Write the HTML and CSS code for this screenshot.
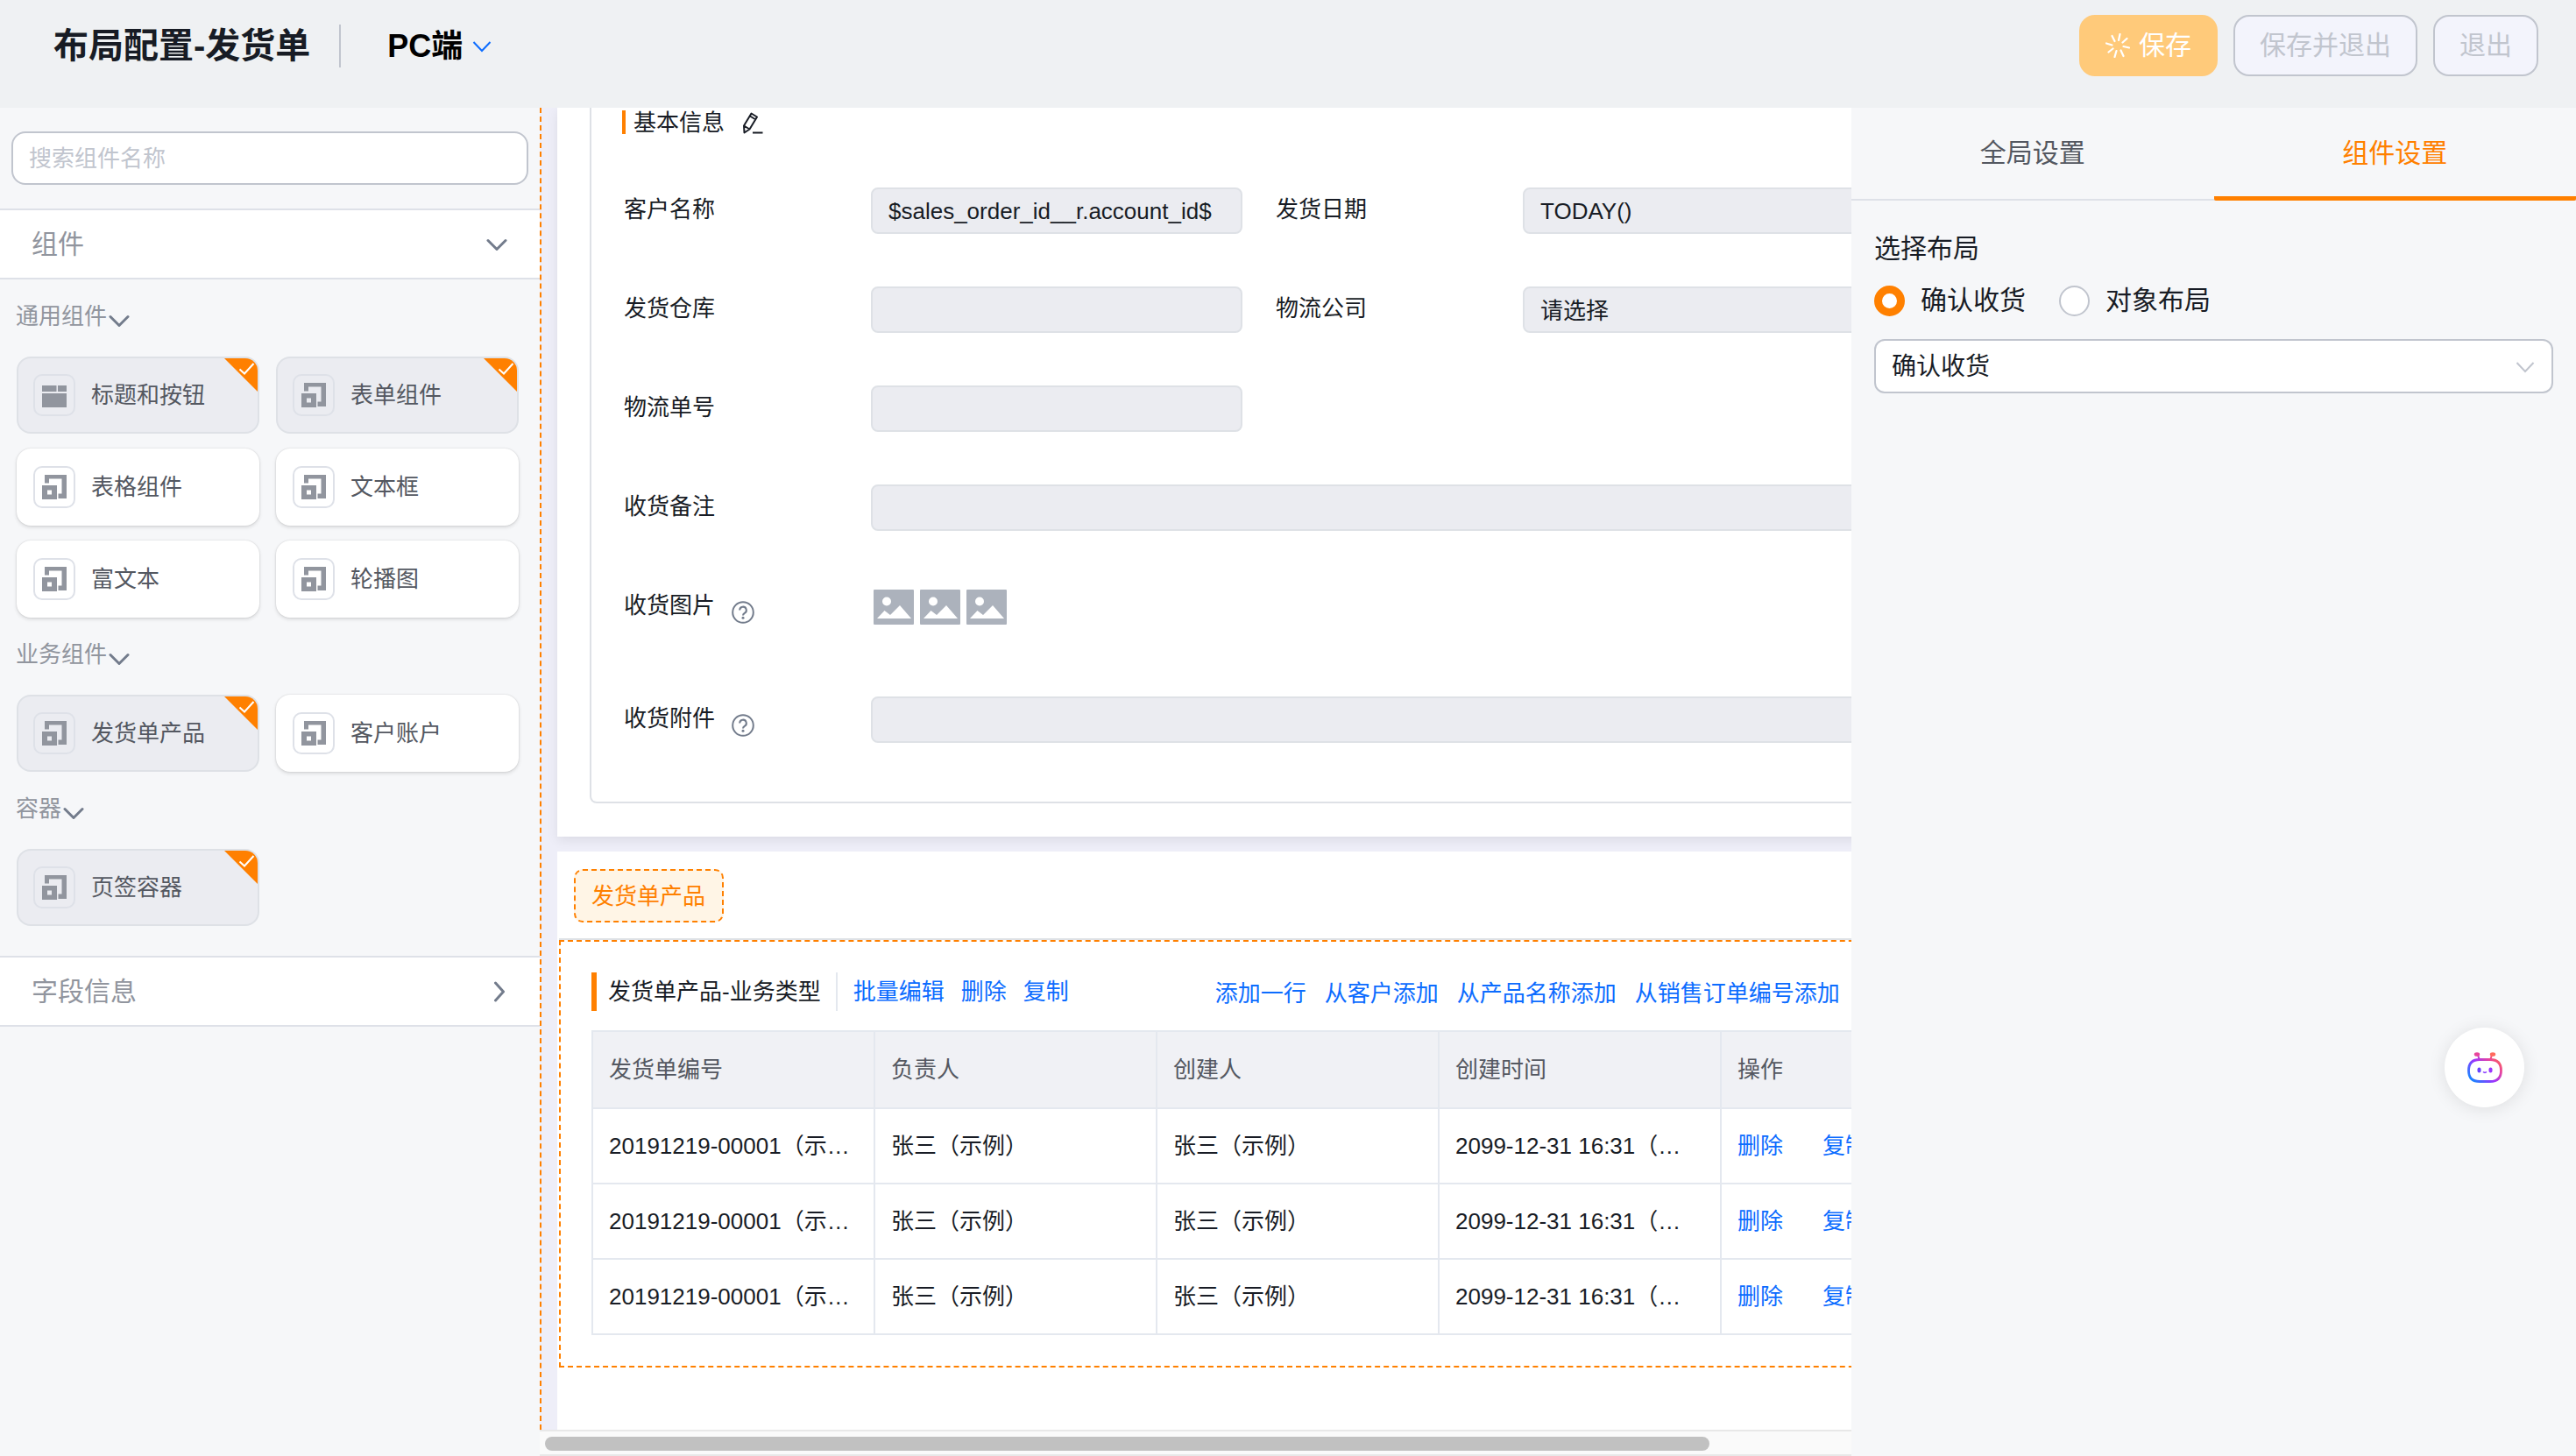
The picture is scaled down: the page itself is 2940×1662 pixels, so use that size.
FILE: index.html
```html
<!DOCTYPE html>
<html lang="zh-CN">
<head>
    <meta charset="UTF-8">
    <meta name="viewport" content="width=device-width, initial-scale=1.0">
    <title>布局配置-发货单</title>
    <link rel="stylesheet" href="styles.css">
</head>
<body>

    <!-- Shared icons -->
    <svg class="sprite" aria-hidden="true">
        <symbol id="i-down" viewBox="0 0 24 24"><path d="M2 7.500l10 10 10-10" fill="none" stroke="currentColor" stroke-width="3" stroke-linecap="round" stroke-linejoin="round"/></symbol>
        <symbol id="i-right" viewBox="0 0 24 24"><path d="M10.500 2l9 10-9 10" fill="none" stroke="currentColor" stroke-width="3" stroke-linecap="round" stroke-linejoin="round"/></symbol>
        <symbol id="i-thin-down" viewBox="0 0 24 24"><path d="M2.500 7l9.500 10 9.500-10" fill="none" stroke="currentColor" stroke-width="2"/></symbol>
        <symbol id="i-comp" viewBox="0 0 28 28"><path fill="currentColor" d="M3 0h25v27h-9.500v-5.500h4V4.500H8v5H3zM0 12h17v16H0zM6 17.500v5h5v-5z" fill-rule="evenodd"/></symbol>
        <symbol id="i-head" viewBox="0 0 28 28"><path fill="currentColor" d="M0 3h16.500v7H0zM18 3h10v7H18zM0 12h28v16H0z"/></symbol>
        <symbol id="i-picked" viewBox="0 0 38 38"><path fill="#ff8000" d="M0 0h38v38z"/><path d="M17.500 12.500l5.500 5 10.500-11.500" fill="none" stroke="#fff" stroke-width="2"/></symbol>
        <symbol id="i-help" viewBox="0 0 26 26"><circle cx="13" cy="13" r="11.800" fill="none" stroke="currentColor" stroke-width="2"/><path d="M9.200 10.500a3.800 3.800 0 1 1 5.600 3.300c-1.300.8-1.800 1.300-1.800 2.800" fill="none" stroke="currentColor" stroke-width="2"/><circle cx="13" cy="19.300" r="1.500" fill="currentColor"/></symbol>
        <symbol id="i-image" viewBox="0 0 46 40"><rect width="46" height="40" rx="1" fill="#acb2bc"/><circle cx="15" cy="13.500" r="5" fill="#fff"/><path d="M4 33l8.500-9 6.500 5 11-11 13 15z" fill="#fff"/></symbol>
    </svg>

    <header class="topbar">
        <h1 class="topbar-title">布局配置-发货单</h1>
        <button class="platform">PC端<svg class="icon"><use href="#i-thin-down"/></svg></button>
        <div class="topbar-actions">
            <button class="btn btn-primary">
                <svg class="spinner" viewBox="0 0 28 28"><path d="M15 8l1.500-7M19.500 10.500l5-4.500M20.500 15l6.500 1.500M17.500 19.500l3 6.500M12.500 20l-2 7M8.500 17.500l-5 4M7.500 13.500L1 11.500M10.500 9L7.500 3" fill="none" stroke="currentColor" stroke-width="2.200" stroke-linecap="round"/></svg>保存
            </button>
            <button class="btn">保存并退出</button>
            <button class="btn">退出</button>
        </div>
    </header>

    <div class="workspace">

        <!-- Component library -->
        <aside class="library">
            <div class="search"><input type="text" placeholder="搜索组件名称" aria-label="搜索组件名称"></div>

            <button class="fold">组件<svg class="icon"><use href="#i-down"/></svg></button>
            <div class="fold-body">
                <button class="group-name">通用组件<svg class="icon"><use href="#i-down"/></svg></button>
                <div class="cards">
                    <button class="card picked"><span class="card-icon"><svg><use href="#i-head"/></svg></span>标题和按钮<svg class="corner"><use href="#i-picked"/></svg></button>
                    <button class="card picked"><span class="card-icon"><svg><use href="#i-comp"/></svg></span>表单组件<svg class="corner"><use href="#i-picked"/></svg></button>
                    <button class="card"><span class="card-icon"><svg><use href="#i-comp"/></svg></span>表格组件</button>
                    <button class="card"><span class="card-icon"><svg><use href="#i-comp"/></svg></span>文本框</button>
                    <button class="card"><span class="card-icon"><svg><use href="#i-comp"/></svg></span>富文本</button>
                    <button class="card"><span class="card-icon"><svg><use href="#i-comp"/></svg></span>轮播图</button>
                </div>
                <button class="group-name">业务组件<svg class="icon"><use href="#i-down"/></svg></button>
                <div class="cards">
                    <button class="card picked"><span class="card-icon"><svg><use href="#i-comp"/></svg></span>发货单产品<svg class="corner"><use href="#i-picked"/></svg></button>
                    <button class="card"><span class="card-icon"><svg><use href="#i-comp"/></svg></span>客户账户</button>
                </div>
                <button class="group-name">容器<svg class="icon"><use href="#i-down"/></svg></button>
                <div class="cards">
                    <button class="card picked"><span class="card-icon"><svg><use href="#i-comp"/></svg></span>页签容器<svg class="corner"><use href="#i-picked"/></svg></button>
                </div>
            </div>
            <button class="fold">字段信息<svg class="icon"><use href="#i-right"/></svg></button>
        </aside>

        <!-- Layout canvas -->
        <main class="stage">
            <div class="canvas">
                <section class="panel form-panel">
                    <div class="form-box">
                        <h2 class="form-title">基本信息
                            <svg class="pencil" viewBox="0 0 24 26"><path d="M2 16.500L10.500 2.500l6.500 4L8.500 20.500l-6 4zM2 16.500l6.500 4M9 5.500l6.500 4M12 24.500h11.500" fill="none" stroke="currentColor" stroke-width="2" stroke-linejoin="round"/></svg>
                        </h2>
                        <div class="fields">
                            <div class="field"><label for="account">客户名称</label><input id="account" type="text" value="$sales_order_id__r.account_id$" readonly></div>
                            <div class="field"><label for="date">发货日期</label><input id="date" type="text" value="TODAY()" readonly></div>
                            <div class="field"><label for="store">发货仓库</label><input id="store" type="text" readonly></div>
                            <div class="field"><label for="express">物流公司</label><select id="express"><option>请选择</option></select></div>
                            <div class="field wide half"><label for="expressNo">物流单号</label><input id="expressNo" type="text" readonly></div>
                            <div class="field wide"><label for="remark">收货备注</label><input id="remark" type="text" readonly></div>
                            <div class="field wide pictures">
                                <span class="label">收货图片<svg class="help"><use href="#i-help"/></svg></span>
                                <div class="thumbs">
                                    <svg><use href="#i-image"/></svg>
                                    <svg><use href="#i-image"/></svg>
                                    <svg><use href="#i-image"/></svg>
                                </div>
                            </div>
                            <div class="field wide"><label for="attach">收货附件<svg class="help"><use href="#i-help"/></svg></label><input id="attach" type="text" readonly></div>
                        </div>
                    </div>
                </section>

                <section class="panel tab-panel">
                    <div class="tab-bar"><button class="tab-chip">发货单产品</button></div>
                    <div class="selected">
                        <div class="toolbar">
                            <h2 class="toolbar-title">发货单产品-业务类型</h2>
                            <div class="links batch"><a href="#">批量编辑</a><a href="#">删除</a><a href="#">复制</a></div>
                            <div class="links adders"><a href="#">添加一行</a><a href="#">从客户添加</a><a href="#">从产品名称添加</a><a href="#">从销售订单编号添加</a></div>
                        </div>
                        <table class="grid">
                            <thead>
                                <tr><th>发货单编号</th><th>负责人</th><th>创建人</th><th>创建时间</th><th>操作</th></tr>
                            </thead>
                            <tbody>
                                <tr><td>20191219-00001（示例）</td><td>张三（示例）</td><td>张三（示例）</td><td>2099-12-31 16:31（示例）</td><td><a href="#">删除</a><a href="#">复制</a></td></tr>
                                <tr><td>20191219-00001（示例）</td><td>张三（示例）</td><td>张三（示例）</td><td>2099-12-31 16:31（示例）</td><td><a href="#">删除</a><a href="#">复制</a></td></tr>
                                <tr><td>20191219-00001（示例）</td><td>张三（示例）</td><td>张三（示例）</td><td>2099-12-31 16:31（示例）</td><td><a href="#">删除</a><a href="#">复制</a></td></tr>
                            </tbody>
                        </table>
                    </div>
                </section>
            </div>
            <div class="scrollbar"><div class="thumb"></div></div>
        </main>

        <!-- Settings -->
        <aside class="settings">
            <nav class="tabs">
                <button class="tab">全局设置</button>
                <button class="tab active">组件设置</button>
            </nav>
            <div class="settings-body">
                <div class="settings-name">选择布局</div>
                <div class="radios">
                    <label><input type="radio" name="layout" checked>确认收货</label>
                    <label><input type="radio" name="layout">对象布局</label>
                </div>
                <div class="select-box">
                    <select aria-label="选择布局"><option>确认收货</option></select>
                    <svg class="icon"><use href="#i-thin-down"/></svg>
                </div>
            </div>
        </aside>
    </div>

    <!-- Floating assistant -->
    <button class="assistant" aria-label="助手">
        <svg viewBox="0 0 42 38">
            <defs>
                <linearGradient id="bot" x1="4" y1="34" x2="36" y2="4" gradientUnits="userSpaceOnUse">
                    <stop offset="0" stop-color="#0a8cff"/>
                    <stop offset=".45" stop-color="#9a35ff"/>
                    <stop offset=".75" stop-color="#e8459c"/>
                    <stop offset="1" stop-color="#ff6a4d"/>
                </linearGradient>
            </defs>
            <path d="M15 9.500h12c8 0 12.500 3.500 12.500 12.500S35 34.500 27 34.500H15C7 34.500 2.500 31 2.500 22S7 9.500 15 9.500z" fill="none" stroke="url(#bot)" stroke-width="2.800"/>
            <path d="M14.500 9l-1.500-5M27.500 9L29 4" stroke="url(#bot)" stroke-width="2"/>
            <ellipse cx="12" cy="3.500" rx="3.200" ry="2.300" fill="#e8459c"/>
            <ellipse cx="30" cy="3.500" rx="3.200" ry="2.300" fill="#ff6a5d"/>
            <rect x="12.500" y="18.500" width="4" height="6" rx="2" fill="#6a45ff"/>
            <rect x="25.500" y="18.500" width="4" height="6" rx="2" fill="#9a35ff"/>
            <path d="M19 23.500q2 1.800 4 0" fill="none" stroke="#8a3cff" stroke-width="1.500"/>
        </svg>
    </button>

</body>
</html>
```

FILE: styles.css
```css
* {
    box-sizing: border-box;
}
body {
    margin: 0;
    height: 100vh;
    display: flex;
    flex-direction: column;
    overflow: hidden;
    font-family: "Liberation Sans", "Noto Sans CJK SC", sans-serif;
    font-size: 26px;
    line-height: 40px;
    color: #181c25;
    background: #eff1f3;
}
button, input, select {
    font: inherit;
    color: inherit;
    margin: 0;
    padding: 0;
    border: 0;
    background: none;
    appearance: none;
}
button {
    cursor: pointer;
}
h1, h2 {
    margin: 0;
    font-weight: normal;
}
a {
    color: #0c6cff;
    text-decoration: none;
}
.sprite {
    display: none;
}
.icon {
    width: 24px;
    height: 24px;
    flex: none;
    color: #737c8c;
}

/* Top bar */
.topbar {
    height: 123px;
    flex: none;
    display: flex;
    align-items: flex-start;
    padding: 17px 43px 0 61px;
}
.topbar-title {
    margin-top: 11px;
    padding-right: 33px;
    border-right: 2px solid #c1c5ce;
    font-size: 40px;
    line-height: 49px;
    font-weight: bold;
}
.platform {
    display: flex;
    align-items: center;
    gap: 10px;
    margin: 11px 0 0 53px;
    font-size: 36px;
    line-height: 49px;
    font-weight: bold;
    color: #000;
}
.platform .icon {
    color: #0c6cff;
}
.topbar-actions {
    display: flex;
    gap: 18px;
    margin-left: auto;
}
.btn {
    display: flex;
    align-items: center;
    height: 70px;
    padding: 0 28px;
    border: 2px solid #c1c5ce;
    border-radius: 18px;
    background: #f3f4fc;
    color: #c1c5ce;
    font-size: 30px;
}
.btn-primary {
    border-color: #ffca7a;
    background: #ffca7a;
    color: #fff;
}
.spinner {
    width: 28px;
    height: 28px;
    margin-right: 10px;
}

.workspace {
    flex: 1;
    min-height: 0;
    display: flex;
}

/* Component library */
.library {
    width: 616px;
    flex: none;
    background: #f6f7f9;
}
.search {
    padding: 27px 13px;
}
.search input {
    display: block;
    width: 100%;
    height: 61px;
    padding: 2px 18px 0;
    border: 2px solid #c1c5ce;
    border-radius: 16px;
    background: #fff;
}
.search input::placeholder {
    color: #c1c5ce;
    opacity: 1;
}
.fold {
    display: flex;
    align-items: center;
    justify-content: space-between;
    width: 100%;
    height: 81px;
    padding: 0 37px 0 36px;
    border: solid #dee1e8;
    border-width: 2px 0;
    background: #fff;
    font-size: 30px;
    color: #91959e;
}
.fold-body {
    padding: 0 24px 34px 19px;
}
.group-name {
    display: flex;
    align-items: center;
    height: 84px;
    margin: 0 0 4px -1px;
    color: #91959e;
}
.group-name .icon {
    margin: 9px 0 0 2px;
}
.cards {
    display: grid;
    grid-template-columns: 1fr 1fr;
    gap: 17px 19px;
}
.card {
    position: relative;
    display: flex;
    align-items: center;
    height: 88px;
    padding: 0 19px;
    border-radius: 16px;
    background: #fff;
    box-shadow: 0 0 2px rgba(0, 0, 0, 0.15), 0 2px 4px rgba(0, 0, 0, 0.12);
    color: #545861;
    overflow: hidden;
}
.card.picked {
    padding: 0 17px;
    border: 2px solid #dee1e6;
    background: #ebecf1;
    box-shadow: none;
}
.card-icon {
    display: flex;
    width: 48px;
    height: 48px;
    margin-right: 18px;
    padding: 8px;
    border: 2px solid #dee1e8;
    border-radius: 10px;
    color: #91959e;
}
.card-icon svg {
    width: 28px;
    height: 28px;
}
.corner {
    position: absolute;
    top: 0;
    right: 0;
    width: 38px;
    height: 38px;
}

/* Canvas */
.stage {
    flex: 1;
    min-width: 0;
    display: flex;
    flex-direction: column;
}
.canvas {
    flex: 1;
    min-height: 0;
    display: flex;
    flex-direction: column;
    padding-left: 18px;
    border-left: 2px dashed #ff8000;
    background: #eeeef8;
    overflow: hidden;
}
.panel {
    width: 1640px;
    flex: none;
    background: #fff;
}
.form-panel {
    padding: 0 38px 38px 37px;
    margin-bottom: 17px;
    box-shadow: 0 4px 12px rgba(0, 0, 0, 0.08);
}
.form-box {
    padding: 3px 37px 68px 35px;
    border: solid #dee1e6;
    border-width: 0 2px 2px;
    border-radius: 0 0 8px 8px;
}
.form-title {
    display: flex;
    align-items: center;
    gap: 20px;
    height: 27px;
    padding-left: 9px;
    border-left: 4px solid #ff8000;
    font-size: 26px;
    line-height: 26px;
}
.pencil {
    width: 24px;
    height: 26px;
}
.fields {
    display: grid;
    grid-template-columns: 706px 706px;
    gap: 61px 38px;
    margin: 61px 0 0 2px;
}
.field {
    display: grid;
    grid-template-columns: 282px 1fr;
    align-items: start;
}
.field.wide {
    grid-column: span 2;
}
.field.half {
    grid-template-columns: 282px 424px;
}
.field label,
.field .label {
    display: flex;
    align-items: center;
    line-height: 50px;
}
.field input,
.field select {
    width: 100%;
    height: 53px;
    margin-bottom: -1px;
    padding: 2px 18px 0;
    border: 2px solid #dee1e6;
    border-radius: 8px;
    background: #ebecf1;
}
.help {
    width: 26px;
    height: 26px;
    margin: 16px 0 0 19px;
    color: #737c8c;
}
.pictures {
    height: 68px;
}
.thumbs {
    display: flex;
    gap: 7px;
    padding: 7px 3px;
}
.thumbs svg {
    width: 46px;
    height: 40px;
}

/* Product tab */
.tab-panel {
    flex: 1 0 auto;
    padding-left: 2px;
}
.tab-bar {
    padding: 20px 17px 18px;
    border-bottom: 2px solid #dee1e6;
}
.tab-chip {
    display: block;
    height: 61px;
    padding: 0 19px 0 18px;
    border: 2px dashed #ff8000;
    border-radius: 10px;
    background: #fff5e6;
    color: #ff8000;
}
.selected {
    padding: 35px;
    border: 2px dashed #ff8000;
}
.toolbar {
    display: flex;
    align-items: center;
    height: 44px;
    margin-bottom: 22px;
}
.toolbar-title {
    padding: 0 17px 0 13px;
    border-left: 6px solid #ff8000;
    border-right: 2px solid #e4e8ef;
    font-size: 26px;
    line-height: 44px;
}
.links {
    display: flex;
    gap: 19px;
    padding-left: 18px;
}
.adders {
    gap: 21px;
    margin-left: 149px;
    padding-top: 4px;
}
.grid {
    width: 1550px;
    table-layout: fixed;
    border-collapse: collapse;
}
.grid th,
.grid td {
    width: 322px;
    height: 86px;
    padding: 0 20px 0 18px;
    border: 2px solid #e4e8ef;
    text-align: left;
    white-space: nowrap;
    overflow: hidden;
    text-overflow: ellipsis;
}
.grid th:last-child,
.grid td:last-child {
    width: auto;
}
.grid th {
    height: 88px;
    background: #f0f1f5;
    color: #545861;
    font-weight: normal;
}
.grid a {
    margin-right: 45px;
}
.scrollbar {
    height: 30px;
    flex: none;
    padding: 6px;
    border: solid #e8e8e8;
    border-width: 2px 0;
    background: #fafafa;
}
.thumb {
    width: 89.5%;
    height: 16px;
    border-radius: 8px;
    background: #c1c1c1;
}

/* Settings */
.settings {
    width: 827px;
    flex: none;
    background: #f6f7f9;
}
.tabs {
    display: flex;
    height: 106px;
    border-bottom: 2px solid #dee1e8;
}
.tab {
    flex: 1;
    height: 106px;
    padding-top: 3px;
    border-bottom: 5px solid transparent;
    font-size: 30px;
    color: #545861;
}
.tab.active {
    border-color: #ff8000;
    border-radius: 2px;
    color: #ff8000;
}
.settings-body {
    padding: 35px 26px;
    font-size: 30px;
}
.radios {
    display: flex;
    gap: 38px;
    margin: 19px 0 24px;
}
.radios label {
    display: flex;
    align-items: center;
    gap: 18px;
}
.radios input {
    width: 35px;
    height: 35px;
    border: 2px solid #c1c5ce;
    border-radius: 50%;
    background: #fff;
}
.radios input:checked {
    border: 9px solid #ff8000;
}
.select-box {
    position: relative;
}
.select-box select {
    display: block;
    width: 100%;
    height: 62px;
    padding: 2px 18px 0;
    border: 2px solid #c1c5ce;
    border-radius: 12px;
    background: #fff;
    font-size: 28px;
}
.select-box .icon {
    position: absolute;
    top: 20px;
    right: 20px;
    color: #c1c5ce;
    pointer-events: none;
}

/* Assistant */
.assistant {
    position: fixed;
    right: 59px;
    bottom: 398px;
    display: flex;
    align-items: center;
    justify-content: center;
    width: 91px;
    height: 91px;
    border-radius: 50%;
    background: #fff;
    box-shadow: 0 2px 20px rgba(0, 0, 0, 0.1);
}
.assistant svg {
    width: 42px;
    height: 38px;
}
```
